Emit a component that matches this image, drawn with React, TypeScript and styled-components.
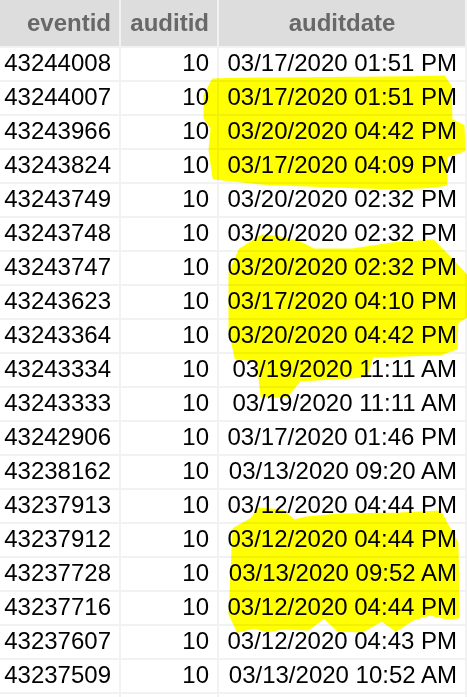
import styled, { createGlobalStyle } from "styled-components";

const rows: [string, string, string][] = [
  ["43244008", "10", "03/17/2020 01:51 PM"],
  ["43244007", "10", "03/17/2020 01:51 PM"],
  ["43243966", "10", "03/20/2020 04:42 PM"],
  ["43243824", "10", "03/17/2020 04:09 PM"],
  ["43243749", "10", "03/20/2020 02:32 PM"],
  ["43243748", "10", "03/20/2020 02:32 PM"],
  ["43243747", "10", "03/20/2020 02:32 PM"],
  ["43243623", "10", "03/17/2020 04:10 PM"],
  ["43243364", "10", "03/20/2020 04:42 PM"],
  ["43243334", "10", "03/19/2020 11:11 AM"],
  ["43243333", "10", "03/19/2020 11:11 AM"],
  ["43242906", "10", "03/17/2020 01:46 PM"],
  ["43238162", "10", "03/13/2020 09:20 AM"],
  ["43237913", "10", "03/12/2020 04:44 PM"],
  ["43237912", "10", "03/12/2020 04:44 PM"],
  ["43237728", "10", "03/13/2020 09:52 AM"],
  ["43237716", "10", "03/12/2020 04:44 PM"],
  ["43237607", "10", "03/12/2020 04:43 PM"],
  ["43237509", "10", "03/13/2020 10:52 AM"],
  ["", "", ""],
];

// hand-drawn highlighter marks over the auditdate column
const marks = [
  "M213 80 C260 78 380 79 444 77 L450 86 L451 120 L463 126 L464 150 L446 156 L446 184 C420 191 330 186 260 183 L214 178 L210 150 L212 128 L205 118 L205 96 Z",
  "M240 250 L262 236 L276 237 L300 243 L314 250 L352 250 L392 244 L433 241 L448 256 L462 271 L467 277 L467 316 L457 322 L456 348 L440 354 L372 356 L366 376 L300 380 L286 396 L262 396 L258 360 L236 358 L230 330 L230 273 Z",
  "M234 529 L252 519 L258 509 L282 511 L294 521 L306 518 L340 515 L400 514 L440 512 L448 527 L457 543 L458 617 L447 618 L430 614 L413 619 L396 630 L382 620 L362 631 L338 630 L324 617 L308 629 L282 628 L268 631 L254 627 L238 631 L230 614 Z",
];

const App = () => (
  <>
    <GlobalStyle />
    <Sheet>
      <Grid>
        <HeadCell $align="right">eventid</HeadCell>
        <HeadCell $align="right">auditid</HeadCell>
        <HeadCell $align="center">auditdate</HeadCell>
        {rows.map(([id, audit, date], i) => (
          <Row key={i}>
            <Cell $align="right">{id}</Cell>
            <Cell $align="right">{audit}</Cell>
            <Cell $align="right">{date}</Cell>
          </Row>
        ))}
      </Grid>
      <Marker viewBox="0 0 467 697" width="467" height="697">
        {marks.map((d, i) => (
          <path key={i} d={d} fill="#ffff00" strokeLinejoin="round" stroke="#ffff00" strokeWidth="3" />
        ))}
      </Marker>
    </Sheet>
  </>
);

const GlobalStyle = createGlobalStyle`
  html, body {
    margin: 0;
    background: #fff;
    overflow: hidden;
  }
  body {
    font-family: "Liberation Sans", Arial, sans-serif;
  }
`;

const Sheet = styled.div`
  position: relative;
  width: 467px;
  height: 697px;
  overflow: hidden;
`;

const Grid = styled.div`
  display: grid;
  grid-template-columns: 119px 96px 246px;
  grid-template-rows: 46px;
  grid-auto-rows: 32px;
  gap: 2px;
  padding: 0 2px 2px 0;
  width: 465px;
  background: #f2f2f2;
`;

const Row = styled.div`
  display: contents;
`;

const HeadCell = styled.div<{ $align: "left" | "right" | "center" }>`
  display: flex;
  align-items: center;
  justify-content: ${(p) =>
    p.$align === "right" ? "flex-end" : p.$align === "center" ? "center" : "flex-start"};
  padding: 0 8px 1px;
  background: #dddddd;
  color: #686868;
  font-size: 24px;
  font-weight: 700;
`;

const Cell = styled.div<{ $align: "left" | "right" | "center" }>`
  display: flex;
  align-items: center;
  justify-content: ${(p) => (p.$align === "right" ? "flex-end" : "flex-start")};
  padding: 0 8px 2px 3px;
  background: #fff;
  color: #000;
  font-size: 24px;
  white-space: nowrap;
`;

const Marker = styled.svg`
  position: absolute;
  top: 0;
  left: 0;
  pointer-events: none;
  mix-blend-mode: multiply;
`;

export default App;
